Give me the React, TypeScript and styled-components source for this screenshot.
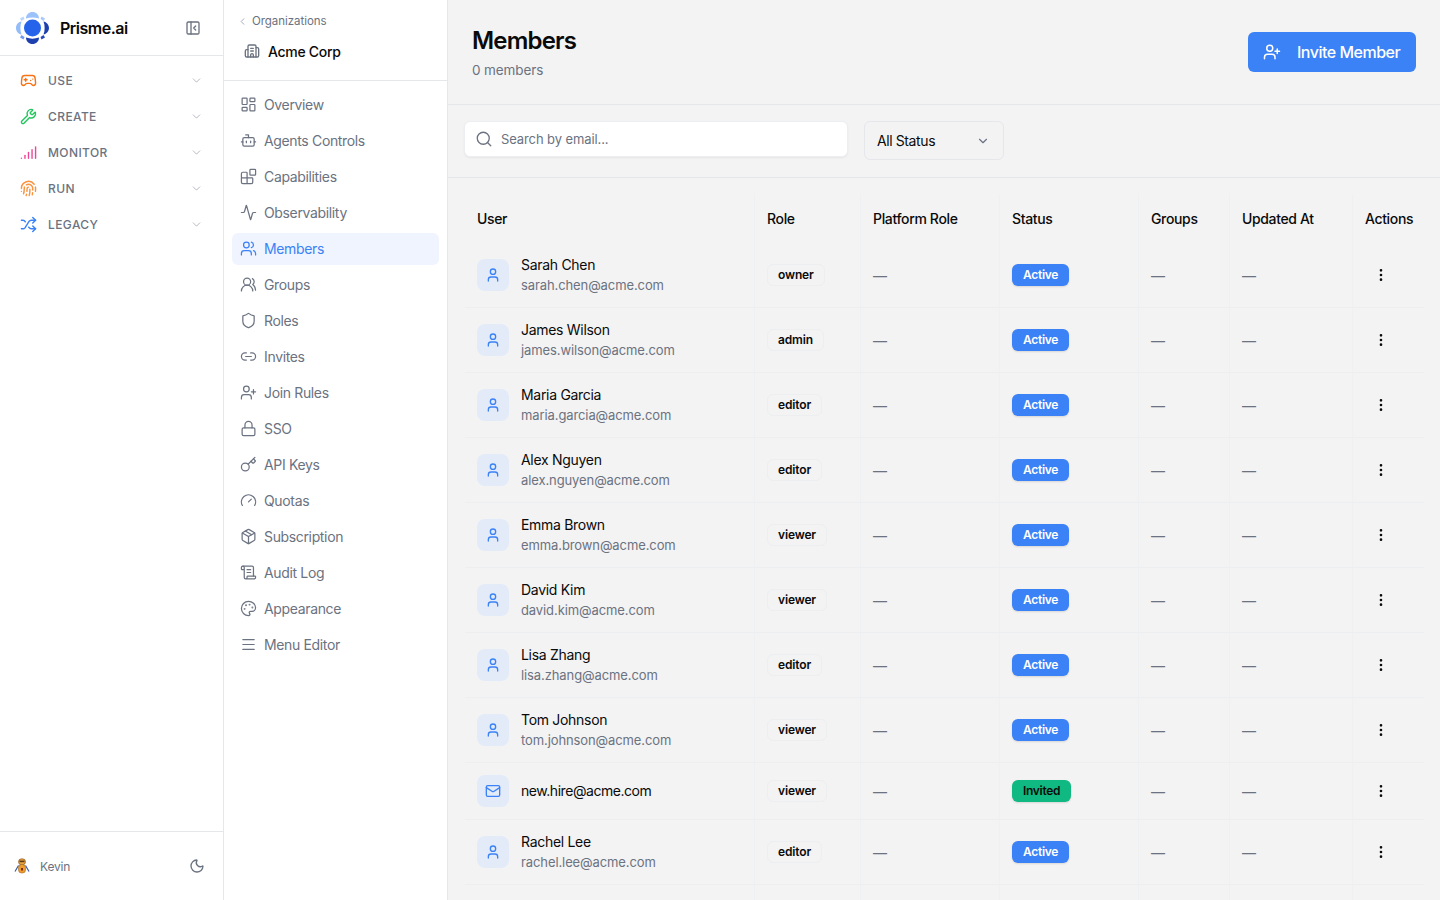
import React from 'react';
import styled, { createGlobalStyle } from 'styled-components';
import {
  Activity,
  Blocks,
  Bot,
  Building2,
  ChevronDown,
  ChevronLeft,
  EllipsisVertical,
  Fingerprint,
  Gamepad2,
  Gauge,
  Key,
  LayoutDashboard,
  Link2,
  Lock,
  Mail,
  Menu,
  Moon,
  Package,
  Palette,
  PanelLeftClose,
  ScrollText,
  Search,
  Shield,
  Shuffle,
  Signal,
  User,
  UserPlus,
  Users,
  UsersRound,
  Wrench,
} from 'lucide-react';

const FONT = `Inter, "Noto Sans", sans-serif`;

const GlobalStyle = createGlobalStyle`
  html, body { margin: 0; padding: 0; height: 100%; }
  body { font-family: ${FONT}; background: #f3f3f4; color: #0a0a0a; overflow: hidden; }
  * { box-sizing: border-box; }
`;

const Shell = styled.div`
  display: grid;
  grid-template-columns: 224px 224px minmax(0, 1fr);
  grid-template-rows: minmax(0, 1fr);
  height: 100vh;
  overflow: hidden;
`;

const Rail = styled.aside`
  display: flex;
  flex-direction: column;
  min-height: 0;
  background: #fff;
  border-right: 1px solid #e5e7eb;
`;

const Brand = styled.div`
  height: 56px;
  flex: none;
  display: flex;
  align-items: center;
  padding: 0 22px 0 16px;
  border-bottom: 1px solid #e5e7eb;
`;

const BrandName = styled.span`
  margin-left: 11px;
  font-size: 16px;
  font-weight: 600;
  letter-spacing: -0.5px;
  flex: 1;
`;

const RailNav = styled.nav`
  flex: 1;
  padding-top: 6px;
`;

const RailItem = styled.div`
  height: 36px;
  display: flex;
  align-items: center;
  padding: 0 20px;
  color: #6b7280;
  font-size: 12px;
  font-weight: 500;
  letter-spacing: 0.4px;
`;

const RailLabel = styled.span`
  margin-left: 11px;
  flex: 1;
`;

const RailFoot = styled.div`
  height: 69px;
  flex: none;
  display: flex;
  align-items: center;
  padding: 0 18px 0 14px;
  border-top: 1px solid #e5e7eb;
  color: #6b7280;
  font-size: 12px;
  letter-spacing: -0.2px;
`;

const FootName = styled.span`
  margin-left: 10px;
  flex: 1;
`;

const SubNav = styled.aside`
  min-height: 0;
  background: #fff;
  border-right: 1px solid #e5e7eb;
`;

const OrgHead = styled.div`
  height: 81px;
  padding: 13px 0 0 13px;
  border-bottom: 1px solid #e5e7eb;
`;

const BackLink = styled.div`
  display: flex;
  align-items: center;
  gap: 4px;
  color: #6b7280;
  font-size: 11.5px;
  letter-spacing: -0.05px;
  height: 16px;
`;

const OrgName = styled.div`
  display: flex;
  align-items: center;
  gap: 8px;
  margin: 6px 0 0 7px;
  height: 32px;
  font-size: 14px;
  font-weight: 500;
  letter-spacing: -0.3px;
`;

const SubList = styled.nav`
  padding: 8px;
  display: flex;
  flex-direction: column;
`;

const SubItem = styled.div<{ $active?: boolean }>`
  height: 32px;
  margin-bottom: 4px;
  display: flex;
  align-items: center;
  gap: 7px;
  padding: 0 8px 1px;
  border-radius: 6px;
  font-size: 14px;
  letter-spacing: -0.35px;
  color: ${(p) => (p.$active ? '#3b82f6' : '#6b7280')};
  background: ${(p) => (p.$active ? '#eff4fe' : 'transparent')};
`;

const Main = styled.main`
  min-width: 0;
  min-height: 0;
  overflow: hidden;
  background: #f3f3f4;
`;

const PageHead = styled.header`
  height: 105px;
  display: flex;
  justify-content: space-between;
  padding: 25px 24px 0;
  border-bottom: 1px solid #e5e7eb;
`;

const Title = styled.h1`
  margin: 0;
  font-size: 24px;
  line-height: 32px;
  font-weight: 600;
  letter-spacing: -0.8px;
  color: #0a0a0a;
`;

const Subtitle = styled.p`
  margin: 3px 0 0;
  font-size: 13.5px;
  line-height: 20px;
  letter-spacing: -0.1px;
  color: #6b7280;
`;

const InviteButton = styled.button`
  width: 168px;
  height: 40px;
  margin-top: 7px;
  display: flex;
  align-items: center;
  gap: 16px;
  padding: 0 15px;
  border: 0;
  border-radius: 6px;
  background: #3b82f6;
  color: #fff;
  font-family: ${FONT};
  font-size: 16px;
  font-weight: 500;
  letter-spacing: -0.5px;
  white-space: nowrap;
`;

const Filters = styled.div`
  height: 73px;
  display: flex;
  gap: 16px;
  padding: 16px 16px 0;
  border-bottom: 1px solid #e5e7eb;
`;

const SearchBox = styled.div`
  width: 384px;
  height: 36px;
  display: flex;
  align-items: center;
  gap: 8px;
  padding: 0 10px;
  background: #fff;
  border: 1px solid #eceef1;
  border-radius: 6px;
  box-shadow: 0 1px 2px rgba(0, 0, 0, 0.06);
  color: #6b7280;
  font-size: 13px;
  letter-spacing: -0.1px;
`;

const StatusSelect = styled.div`
  width: 140px;
  height: 39px;
  display: flex;
  align-items: center;
  justify-content: space-between;
  padding: 0 13px 0 12px;
  border: 1px solid #e5e7eb;
  border-radius: 6px;
  font-size: 14px;
  letter-spacing: -0.4px;
  color: #0a0a0a;
`;

const TableWrap = styled.div`
  padding: 16px 16px 0 17px;
`;

const Table = styled.table`
  width: 959px;
  table-layout: fixed;
  border-collapse: separate;
  border-spacing: 0;
`;

const Th = styled.th`
  height: 49px;
  padding: 0 12px;
  text-align: left;
  font-size: 14px;
  font-weight: 500;
  letter-spacing: -0.35px;
  color: #0a0a0a;
  border-left: 1px solid #eef0f2;
  &:first-child { border-left: 0; }
`;

const Tr = styled.tr<{ $short?: boolean }>`
  height: ${(p) => (p.$short ? 57 : 65)}px;
`;

const Td = styled.td`
  padding: 0 12px;
  border-left: 1px solid #eef0f2;
  border-bottom: 1px solid #eceef0;
  &:first-child { border-left: 0; }
`;

const UserCell = styled.div`
  display: flex;
  align-items: center;
  gap: 12px;
`;

const Avatar = styled.div`
  width: 32px;
  height: 32px;
  flex: none;
  display: flex;
  align-items: center;
  justify-content: center;
  border-radius: 8px;
  background: #e3ebf9;
  color: #3b82f6;
`;

const UserName = styled.div`
  font-size: 14px;
  line-height: 20px;
  letter-spacing: -0.3px;
  color: #0a0a0a;
`;

const InviteEmail = styled(UserName)`
  letter-spacing: -0.45px;
`;

const UserMail = styled.div`
  font-size: 13px;
  line-height: 20px;
  letter-spacing: -0.1px;
  color: #6b7280;
`;

const RoleBadge = styled.span`
  display: flex;
  width: fit-content;
  align-items: center;
  height: 22px;
  margin-bottom: 1px;
  padding: 0 10px;
  border: 1px solid #eceef0;
  border-radius: 6px;
  font-size: 12px;
  font-weight: 600;
  letter-spacing: -0.15px;
  color: #0a0a0a;
`;

const StatusBadge = styled.span<{ $invited?: boolean }>`
  display: flex;
  width: fit-content;
  align-items: center;
  height: 22px;
  margin-bottom: 1px;
  padding: 0 11px;
  border-radius: 6px;
  font-size: 12px;
  font-weight: 600;
  letter-spacing: -0.3px;
  color: ${(p) => (p.$invited ? '#0a0a0a' : '#fff')};
  background: ${(p) => (p.$invited ? '#10b981' : '#3b82f6')};
  box-shadow: 0 1px 2px rgba(0, 0, 0, 0.12);
`;

const Dash = styled.span`
  font-size: 14px;
  color: #6b7280;
`;

const ActionButton = styled.div`
  width: 32px;
  height: 32px;
  margin-bottom: 1px;
  display: flex;
  align-items: center;
  justify-content: center;
  color: #0a0a0a;
`;

function Logo() {
  return (
    <svg width="33" height="32" viewBox="0 0 33 32" style={{ flex: 'none' }}>
      <path d="M10 6.5C10 2.5 13 0 16.5 0S23 2.5 23 6.5C19 5 14 5 10 6.5Z" fill="#9cc2fb" />
      <path d="M5.5 9.5C2 10 0 13 0 16s2 6 5.5 6.5C4 19 4 13 5.5 9.5Z" fill="#93bcf9" />
      <path d="M27.5 9.5C30.5 10 33 13 33 16s-2.5 6-5.5 6.5C29 19 29 13 27.5 9.5Z" fill="#1e3fae" />
      <circle cx="16.5" cy="16" r="8.5" fill="#2563eb" />
      <path d="M10 25.5C14 27 19 27 23 25.5C23 29.5 20 32 16.5 32S10 29.5 10 25.5Z" fill="#1e40af" />
      <path d="M4 6.5 7.5 4.5 8.5 7 5.5 9Z" fill="#bcd6fc" />
      <path d="M29 6.5 25.5 4.5 24.5 7 27.5 9Z" fill="#a9c9fb" />
      <path d="M4 25.5 7.5 27.5 8.5 25 5.5 23Z" fill="#6e9af0" />
      <path d="M29 25.5 25.5 27.5 24.5 25 27.5 23Z" fill="#2748b8" />
    </svg>
  );
}

function RobotAvatar() {
  return (
    <svg width="16" height="16" viewBox="0 0 16 16" style={{ flex: 'none' }}>
      <path d="M4.5 7.5 1 13.5M11.5 7.5 15 13.5" stroke="#3b5ba8" strokeWidth="1.2" fill="none" />
      <rect x="4.5" y="0.8" width="7" height="6" rx="3" fill="#e8a33d" stroke="#7a4a1e" strokeWidth="0.6" />
      <rect x="5.5" y="2.6" width="5" height="1.6" fill="#5b3a1c" />
      <rect x="4.5" y="6.5" width="7" height="8.5" rx="3" fill="#ef9b2d" stroke="#8a5a22" strokeWidth="0.5" />
      <rect x="7" y="10" width="2" height="2.5" fill="#7a2e12" />
    </svg>
  );
}

const railItems = [
  { label: 'USE', icon: Gamepad2, color: '#f97316' },
  { label: 'CREATE', icon: Wrench, color: '#22c55e' },
  { label: 'MONITOR', icon: Signal, color: '#ec4899' },
  { label: 'RUN', icon: Fingerprint, color: '#fb923c' },
  { label: 'LEGACY', icon: Shuffle, color: '#3b82f6' },
];

const subItems = [
  { label: 'Overview', icon: LayoutDashboard },
  { label: 'Agents Controls', icon: Bot },
  { label: 'Capabilities', icon: Blocks },
  { label: 'Observability', icon: Activity },
  { label: 'Members', icon: Users, active: true },
  { label: 'Groups', icon: UsersRound },
  { label: 'Roles', icon: Shield },
  { label: 'Invites', icon: Link2 },
  { label: 'Join Rules', icon: UserPlus },
  { label: 'SSO', icon: Lock },
  { label: 'API Keys', icon: Key },
  { label: 'Quotas', icon: Gauge },
  { label: 'Subscription', icon: Package },
  { label: 'Audit Log', icon: ScrollText },
  { label: 'Appearance', icon: Palette },
  { label: 'Menu Editor', icon: Menu },
];

const columns = [
  { label: 'User', width: 289 },
  { label: 'Role', width: 106 },
  { label: 'Platform Role', width: 139 },
  { label: 'Status', width: 139 },
  { label: 'Groups', width: 91 },
  { label: 'Updated At', width: 123 },
  { label: 'Actions', width: 72 },
];

const members = [
  { name: 'Sarah Chen', email: 'sarah.chen@acme.com', role: 'owner' },
  { name: 'James Wilson', email: 'james.wilson@acme.com', role: 'admin' },
  { name: 'Maria Garcia', email: 'maria.garcia@acme.com', role: 'editor' },
  { name: 'Alex Nguyen', email: 'alex.nguyen@acme.com', role: 'editor' },
  { name: 'Emma Brown', email: 'emma.brown@acme.com', role: 'viewer' },
  { name: 'David Kim', email: 'david.kim@acme.com', role: 'viewer' },
  { name: 'Lisa Zhang', email: 'lisa.zhang@acme.com', role: 'editor' },
  { name: 'Tom Johnson', email: 'tom.johnson@acme.com', role: 'viewer' },
  { name: '', email: 'new.hire@acme.com', role: 'viewer' },
  { name: 'Rachel Lee', email: 'rachel.lee@acme.com', role: 'editor' },
];

export default function App() {
  return (
    <Shell>
      <GlobalStyle />
      <Rail>
        <Brand>
          <Logo />
          <BrandName>Prisme.ai</BrandName>
          <PanelLeftClose size={16} color="#6b7280" />
        </Brand>
        <RailNav>
          {railItems.map((item) => (
            <RailItem key={item.label}>
              <item.icon size={17} color={item.color} />
              <RailLabel>{item.label}</RailLabel>
              <ChevronDown size={13} color="#a3a9b3" strokeWidth={1.5} />
            </RailItem>
          ))}
        </RailNav>
        <RailFoot>
          <RobotAvatar />
          <FootName>Kevin</FootName>
          <Moon size={16} />
        </RailFoot>
      </Rail>

      <SubNav>
        <OrgHead>
          <BackLink>
            <ChevronLeft size={11} color="#9ca3af" />
            Organizations
          </BackLink>
          <OrgName>
            <Building2 size={16} color="#6b7280" />
            Acme Corp
          </OrgName>
        </OrgHead>
        <SubList>
          {subItems.map((item) => (
            <SubItem key={item.label} $active={item.active}>
              <item.icon size={17} strokeWidth={1.75} />
              {item.label}
            </SubItem>
          ))}
        </SubList>
      </SubNav>

      <Main>
        <PageHead>
          <div>
            <Title>Members</Title>
            <Subtitle>0 members</Subtitle>
          </div>
          <InviteButton>
            <UserPlus size={18} />
            Invite Member
          </InviteButton>
        </PageHead>
        <Filters>
          <SearchBox>
            <Search size={18} strokeWidth={1.75} />
            Search by email...
          </SearchBox>
          <StatusSelect>
            All Status
            <ChevronDown size={14} color="#6b7280" />
          </StatusSelect>
        </Filters>
        <TableWrap>
          <Table>
            <colgroup>
              {columns.map((c) => (
                <col key={c.label} width={c.width} />
              ))}
            </colgroup>
            <thead>
              <tr>
                {columns.map((c) => (
                  <Th key={c.label}>{c.label}</Th>
                ))}
              </tr>
            </thead>
            <tbody>
              {members.map((m) => (
                <Tr key={m.email} $short={!m.name}>
                  <Td>
                    <UserCell>
                      <Avatar>{m.name ? <User size={16} /> : <Mail size={16} />}</Avatar>
                      {m.name ? (
                        <div>
                          <UserName>{m.name}</UserName>
                          <UserMail>{m.email}</UserMail>
                        </div>
                      ) : (
                        <InviteEmail>{m.email}</InviteEmail>
                      )}
                    </UserCell>
                  </Td>
                  <Td>
                    <RoleBadge>{m.role}</RoleBadge>
                  </Td>
                  <Td>
                    <Dash>—</Dash>
                  </Td>
                  <Td>
                    <StatusBadge $invited={!m.name}>{m.name ? 'Active' : 'Invited'}</StatusBadge>
                  </Td>
                  <Td>
                    <Dash>—</Dash>
                  </Td>
                  <Td>
                    <Dash>—</Dash>
                  </Td>
                  <Td>
                    <ActionButton>
                      <EllipsisVertical size={16} />
                    </ActionButton>
                  </Td>
                </Tr>
              ))}
              <Tr>
                {columns.map((c) => (
                  <Td key={c.label} />
                ))}
              </Tr>
            </tbody>
          </Table>
        </TableWrap>
      </Main>
    </Shell>
  );
}
